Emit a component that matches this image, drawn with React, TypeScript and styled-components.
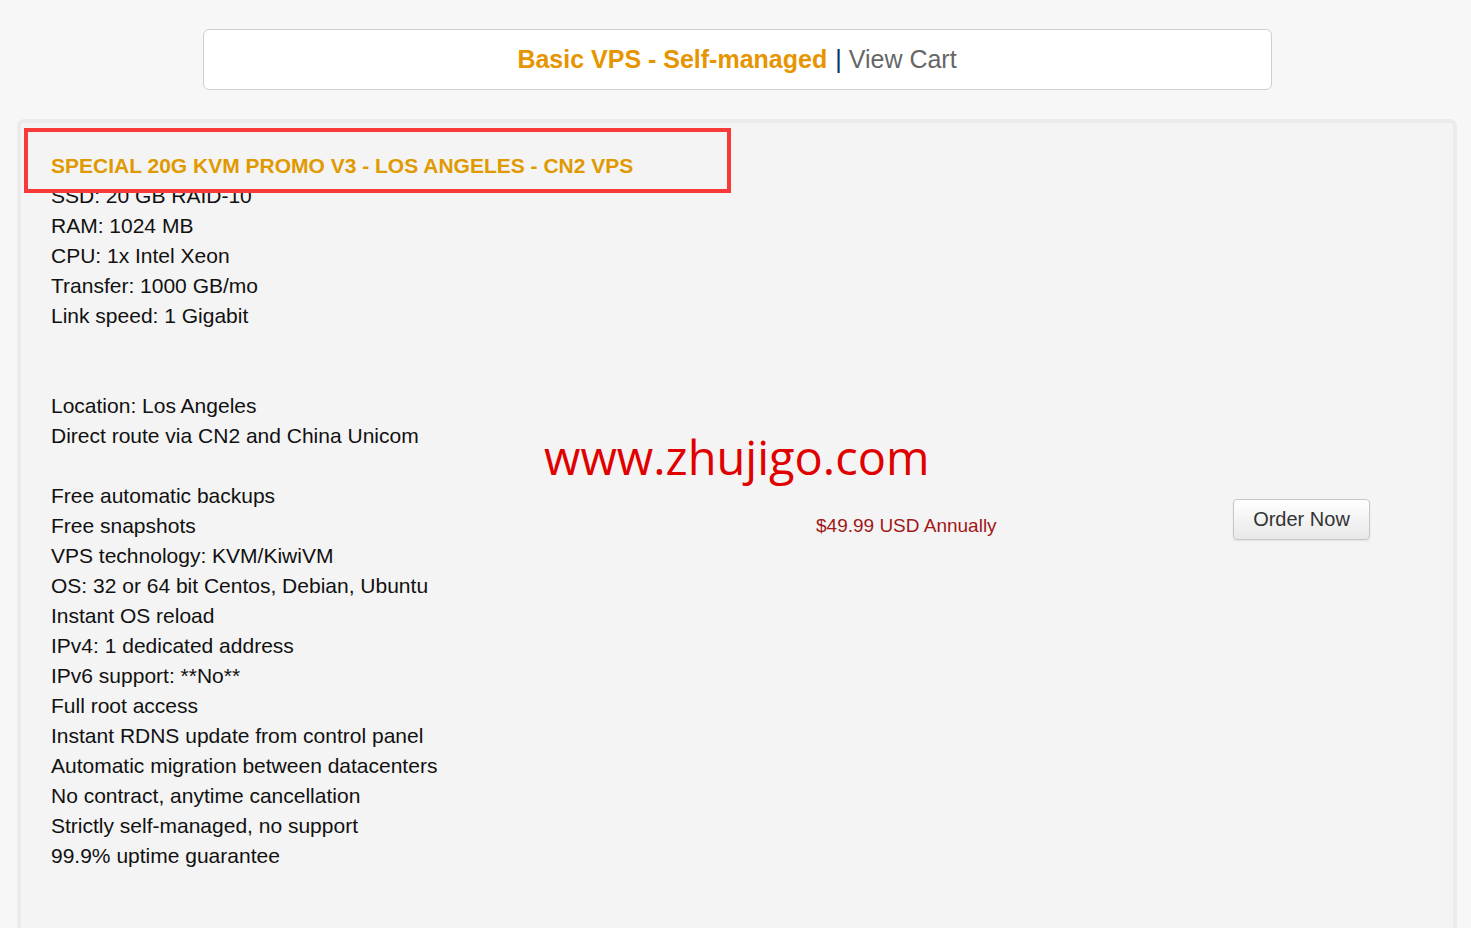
import React from "react";
import styled, { createGlobalStyle } from "styled-components";

const GlobalStyle = createGlobalStyle`
  html, body { margin: 0; padding: 0; }
  body {
    background: #f7f7f7;
    font-family: "Liberation Sans", Arial, sans-serif;
    color: #111;
  }
`;

const Page = styled.div`
  padding: 29px 14px 0 17px;
  display: flex;
  flex-direction: column;
  align-items: stretch;
`;

const HeaderBar = styled.div`
  align-self: center;
  width: 1067px;
  height: 59px;
  background: #fff;
  border: 1px solid #cfcfcf;
  border-radius: 6px;
  display: flex;
  align-items: center;
  justify-content: center;
  font-size: 25px;
`;

const GroupName = styled.span`
  color: #e69500;
  font-weight: bold;
`;

const Separator = styled.span`
  color: #003366;
  margin: 0 7px 0 8px;
`;

const CartLink = styled.span`
  color: #666;
`;

const Panel = styled.div`
  position: relative;
  margin-top: 29px;
  background: #f4f4f4;
  border: 4px solid #ebebeb;
  border-radius: 7px;
  padding: 28px 0 60px 30px;
  min-height: 800px;
`;

const ProductTitle = styled.div`
  color: #e09900;
  font-weight: bold;
  font-size: 21px;
  line-height: 30px;
  text-transform: uppercase;
`;

const ProductRow = styled.div`
  display: grid;
  grid-template-columns: 765px 417px 137px;
  align-items: center;
`;

const Features = styled.div`
  font-size: 21px;
  line-height: 30px;
  color: #111;
`;

const FeatureLine = styled.div`
  min-height: 30px;
`;

const Price = styled.div`
  color: #a01818;
  font-size: 19px;
`;

const OrderButton = styled.button`
  margin-bottom: 14px;
  width: 137px;
  height: 41px;
  font-family: "Liberation Sans", Arial, sans-serif;
  font-size: 20px;
  color: #333;
  background: linear-gradient(#ffffff, #e8e8e8);
  border: 1px solid #c8c8c8;
  border-radius: 4px;
  box-shadow: 0 1px 2px rgba(0, 0, 0, 0.08);
  cursor: pointer;
`;

const Annotation = styled.div`
  position: absolute;
  left: 3px;
  top: 5px;
  width: 699px;
  height: 57px;
  border: 4px solid #f93a3a;
  pointer-events: none;
`;

const Watermark = styled.div`
  position: absolute;
  left: 523px;
  top: 310px;
  font-family: "Open Sans", "Noto Sans", sans-serif;
  font-size: 47px;
  line-height: 48px;
  color: #e00000;
  pointer-events: none;
`;

const features = [
  "SSD: 20 GB RAID-10",
  "RAM: 1024 MB",
  "CPU: 1x Intel Xeon",
  "Transfer: 1000 GB/mo",
  "Link speed: 1 Gigabit",
  "",
  "",
  "Location: Los Angeles",
  "Direct route via CN2 and China Unicom",
  "",
  "Free automatic backups",
  "Free snapshots",
  "VPS technology: KVM/KiwiVM",
  "OS: 32 or 64 bit Centos, Debian, Ubuntu",
  "Instant OS reload",
  "IPv4: 1 dedicated address",
  "IPv6 support: **No**",
  "Full root access",
  "Instant RDNS update from control panel",
  "Automatic migration between datacenters",
  "No contract, anytime cancellation",
  "Strictly self-managed, no support",
  "99.9% uptime guarantee",
];

export default function App() {
  return (
    <>
      <GlobalStyle />
      <Page>
        <HeaderBar>
          <GroupName>Basic VPS - Self-managed</GroupName>
          <Separator>|</Separator>
          <CartLink>View Cart</CartLink>
        </HeaderBar>
        <Panel>
          <ProductTitle>Special 20G KVM PROMO V3 - LOS ANGELES - CN2 VPS</ProductTitle>
          <ProductRow>
            <Features>
              {features.map((f, i) => (
                <FeatureLine key={i}>{f}</FeatureLine>
              ))}
            </Features>
            <Price>$49.99 USD Annually</Price>
            <OrderButton>Order Now</OrderButton>
          </ProductRow>
          <Annotation />
          <Watermark>www.zhujigo.com</Watermark>
        </Panel>
      </Page>
    </>
  );
}
